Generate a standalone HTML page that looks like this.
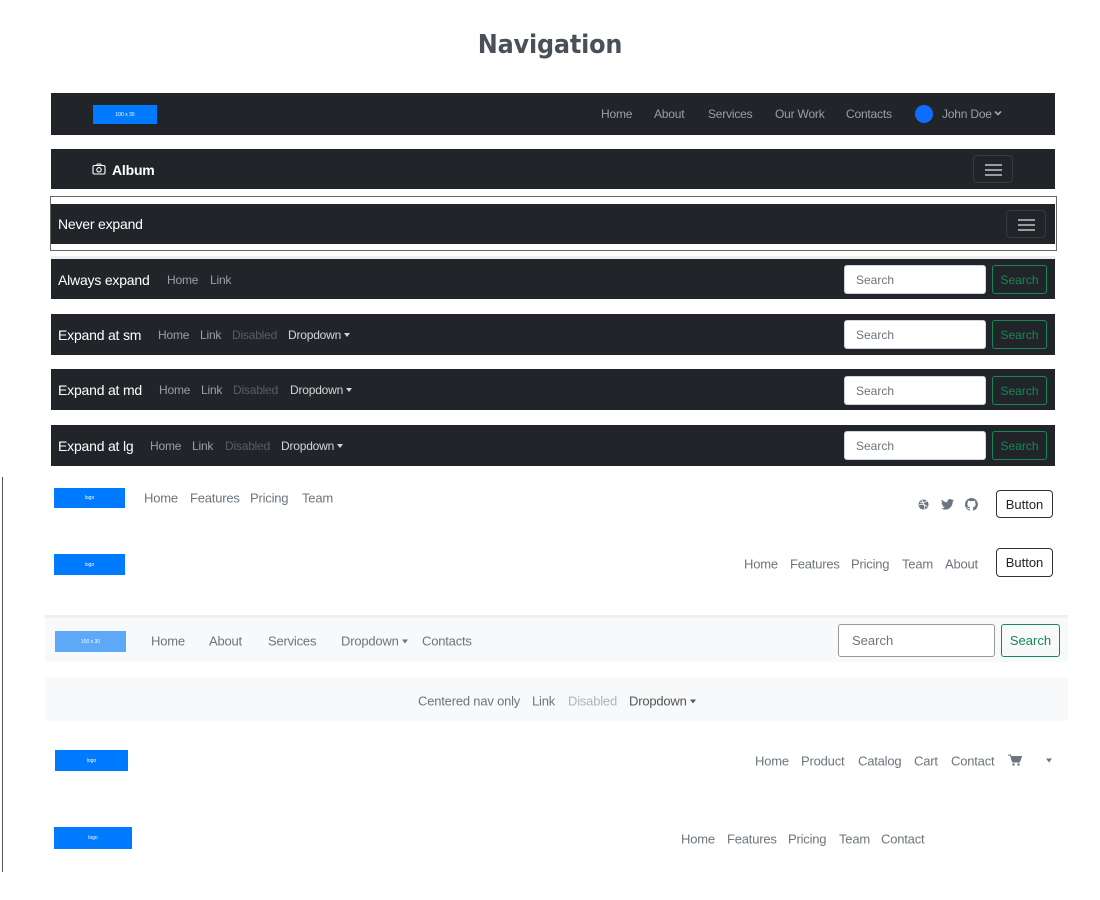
<!DOCTYPE html>
<html><head><meta charset="utf-8"><style>
*{box-sizing:border-box;margin:0;padding:0}
body{width:1100px;height:900px;background:#fff;font-family:"Liberation Sans",sans-serif;position:relative;overflow:hidden}
.a{position:absolute;white-space:nowrap}
.bar{position:absolute;left:51px;width:1004px;background:#212529}
.t{position:absolute;white-space:nowrap;transform:translateY(-50%);line-height:1;letter-spacing:-0.2px}
.dk{color:rgba(255,255,255,.55);font-size:12px}
.wh{color:#fff}
.dis{color:rgba(255,255,255,.25);font-size:12px}
.gr{color:#6c757d;font-size:13px}
.inp{position:absolute;background:#fff;border-radius:3px;border:1px solid #ced4da;color:#6c757d;font-size:12px;padding-left:11px;display:flex;align-items:center}
.sb{position:absolute;border:1px solid #198754;border-radius:3px;color:#198754;font-size:12px;display:flex;align-items:center;justify-content:center}
.logo{position:absolute;background:#007bff;color:#fff;font-size:5px;display:flex;align-items:center;justify-content:center}
.tog{position:absolute;border:1px solid rgba(255,255,255,.1);border-radius:4px}
.tog i{position:absolute;left:11px;width:17px;height:2px;background:rgba(255,255,255,.55)}
.car{display:inline-block;width:0;height:0;border-left:3.5px solid transparent;border-right:3.5px solid transparent;border-top:4px solid currentColor;vertical-align:2px;margin-left:3px}
.btn{position:absolute;border:1px solid #333;border-radius:4px;font-size:13px;color:#212529;display:flex;align-items:center;justify-content:center}
</style></head><body>
<div class="t" style="left:0;width:1100px;text-align:center;top:45px;font-size:26px;font-weight:bold;color:#495057;font-family:'DejaVu Sans','Liberation Sans',sans-serif;transform:translateY(-50%) scaleX(.92)">Navigation</div>

<div class="bar" style="top:93px;height:42px"></div>
<div class="logo" style="left:93px;top:105px;width:64px;height:19px">100 x 30</div>
<div class="t dk" style="left:601px;top:114px">Home</div>
<div class="t dk" style="left:654px;top:114px">About</div>
<div class="t dk" style="left:708px;top:114px">Services</div>
<div class="t dk" style="left:775px;top:114px">Our Work</div>
<div class="t dk" style="left:846px;top:114px">Contacts</div>
<div class="a" style="left:915px;top:105px;width:18px;height:18px;border-radius:50%;background:#0d6efd"></div>
<div class="t dk" style="left:942px;top:114px">John Doe</div>
<svg class="a" style="left:994px;top:110px" width="8" height="6" viewBox="0 0 8 6"><path d="M1 1.5L4 4.5L7 1.5" fill="none" stroke="rgba(255,255,255,.6)" stroke-width="1.6"/></svg>

<div class="bar" style="top:149px;height:40px"></div>
<svg class="a" style="left:92px;top:163px" width="14" height="12" viewBox="0 0 14 12"><rect x="1" y="2.5" width="12" height="8.5" rx="1.5" fill="none" stroke="#fff" stroke-width="1.1"/><path d="M4.5 2.5 L5.5 1 H8.5 L9.5 2.5" fill="none" stroke="#fff" stroke-width="1.1"/><circle cx="7" cy="6.8" r="2.2" fill="none" stroke="#fff" stroke-width="1.1"/></svg>
<div class="t wh" style="left:112px;top:170px;font-size:14px;font-weight:bold">Album</div>
<div class="tog" style="left:973px;top:155px;width:40px;height:28px"><i style="top:8px"></i><i style="top:13px"></i><i style="top:18px"></i></div>

<div class="a" style="left:50px;top:196px;width:1007px;height:55px;border:1px solid #666"></div>
<div class="bar" style="top:204px;height:40px"></div>
<div class="t wh" style="left:58px;top:224px;font-size:14px">Never expand</div>
<div class="tog" style="left:1006px;top:210px;width:40px;height:28px"><i style="top:8px"></i><i style="top:13px"></i><i style="top:18px"></i></div>

<div class="a" style="left:51px;top:256px;width:1004px;height:3px;background:#eee"></div>
<div class="bar" style="top:259px;height:40px"></div>
<div class="t wh" style="left:58px;top:280px;font-size:14px">Always expand</div>
<div class="t dk" style="left:167px;top:280px">Home</div>
<div class="t dk" style="left:210px;top:280px">Link</div>
<div class="inp" style="left:844px;top:265px;width:142px;height:29px">Search</div>
<div class="sb" style="left:992px;top:265px;width:55px;height:29px">Search</div>

<div class="bar" style="top:314px;height:41px"></div>
<div class="t wh" style="left:58px;top:335px;font-size:14px">Expand at sm</div>
<div class="t dk" style="left:158px;top:335px">Home</div>
<div class="t dk" style="left:200px;top:335px">Link</div>
<div class="t dis" style="left:232px;top:335px">Disabled</div>
<div class="t dk" style="left:288px;top:335px;color:rgba(255,255,255,.8)">Dropdown<span class="car"></span></div>
<div class="inp" style="left:844px;top:320px;width:142px;height:29px">Search</div>
<div class="sb" style="left:992px;top:320px;width:55px;height:29px">Search</div>

<div class="bar" style="top:369px;height:41px"></div>
<div class="t wh" style="left:58px;top:390px;font-size:14px">Expand at md</div>
<div class="t dk" style="left:159px;top:390px">Home</div>
<div class="t dk" style="left:201px;top:390px">Link</div>
<div class="t dis" style="left:233px;top:390px">Disabled</div>
<div class="t dk" style="left:290px;top:390px;color:rgba(255,255,255,.8)">Dropdown<span class="car"></span></div>
<div class="inp" style="left:844px;top:376px;width:142px;height:29px">Search</div>
<div class="sb" style="left:992px;top:376px;width:55px;height:29px">Search</div>

<div class="bar" style="top:425px;height:41px"></div>
<div class="t wh" style="left:58px;top:446px;font-size:14px">Expand at lg</div>
<div class="t dk" style="left:150px;top:446px">Home</div>
<div class="t dk" style="left:192px;top:446px">Link</div>
<div class="t dis" style="left:225px;top:446px">Disabled</div>
<div class="t dk" style="left:281px;top:446px;color:rgba(255,255,255,.8)">Dropdown<span class="car"></span></div>
<div class="inp" style="left:844px;top:431px;width:142px;height:29px">Search</div>
<div class="sb" style="left:992px;top:431px;width:55px;height:29px">Search</div>

<div class="a" style="left:2px;top:477px;width:1px;height:395px;background:#555"></div>

<div class="logo" style="left:54px;top:488px;width:71px;height:20px">logo</div>
<div class="t gr" style="left:144px;top:498px">Home</div>
<div class="t gr" style="left:190px;top:498px">Features</div>
<div class="t gr" style="left:250px;top:498px">Pricing</div>
<div class="t gr" style="left:302px;top:498px">Team</div>
<svg class="a" style="left:918px;top:499px" width="11" height="11" viewBox="0 0 12 12"><circle cx="6" cy="6" r="5.5" fill="#6c757d"/><path d="M2 3.5c3 .5 6 0 8-1.5M1 6.5c3-1.5 6-1 9 2M4 1c1.5 2 3 5 3.5 10" fill="none" stroke="#fff" stroke-width=".9"/></svg>
<svg class="a" style="left:941px;top:499px" width="13" height="11" viewBox="0 0 24 20"><path d="M24 2.4a10 10 0 0 1-2.8.8A5 5 0 0 0 23.3.4a10 10 0 0 1-3.1 1.2A4.9 4.9 0 0 0 11.8 6 14 14 0 0 1 1.7.9a4.9 4.9 0 0 0 1.5 6.6 5 5 0 0 1-2.2-.6 4.9 4.9 0 0 0 3.900 4.9 5 5 0 0 1-2.2.1 4.9 4.9 0 0 0 4.6 3.4A9.9 9.9 0 0 1 0 17.3 14 14 0 0 0 7.5 19.5c9.1 0 14-7.500 14-14v-.6A10 10 0 0 0 24 2.4z" fill="#6c757d"/></svg>
<svg class="a" style="left:965px;top:498px" width="13" height="13" viewBox="0 0 16 16"><path d="M8 0a8 8 0 0 0-2.5 15.6c.4 0 .5-.2.5-.4v-1.5c-2.200.5-2.700-1-2.700-1-.4-.9-.9-1.2-.9-1.2-.7-.5.1-.5.1-.5.8.1 1.2.8 1.2.8.7 1.3 1.900.9 2.300.7.1-.5.3-.9.5-1.1-1.800-.2-3.600-.9-3.600-4 0-.9.3-1.600.8-2.100-.1-.2-.4-1 .1-2.100 0 0 .7-.2 2.200.8a7.400 7.400 0 0 1 4 0c1.500-1 2.200-.8 2.200-.8.4 1.100.2 1.900.1 2.100.5.6.8 1.300.8 2.100 0 3.100-1.900 3.800-3.600 4 .3.3.6.8.6 1.500v2.200c0 .2.1.5.6.4A8 8 0 0 0 8 0z" fill="#6c757d"/></svg>
<div class="btn" style="left:996px;top:490px;width:57px;height:28px">Button</div>

<div class="logo" style="left:54px;top:554px;width:71px;height:21px">logo</div>
<div class="t gr" style="left:744px;top:564px">Home</div>
<div class="t gr" style="left:790px;top:564px">Features</div>
<div class="t gr" style="left:851px;top:564px">Pricing</div>
<div class="t gr" style="left:902px;top:564px">Team</div>
<div class="t gr" style="left:945px;top:564px">About</div>
<div class="btn" style="left:996px;top:548px;width:57px;height:29px">Button</div>

<div class="a" style="left:45px;top:615px;width:1023px;height:47px;background:#f8f9fa;border-top:3px solid #eff0f1"></div>
<div class="logo" style="left:55px;top:631px;width:71px;height:21px;background:#5ea8f8">100 x 30</div>
<div class="t gr" style="left:151px;top:641px">Home</div>
<div class="t gr" style="left:209px;top:641px">About</div>
<div class="t gr" style="left:268px;top:641px">Services</div>
<div class="t gr" style="left:341px;top:641px">Dropdown<span class="car"></span></div>
<div class="t gr" style="left:422px;top:641px">Contacts</div>
<div class="inp" style="left:838px;top:624px;width:157px;height:33px;font-size:13px;padding-left:13px;border-color:#999">Search</div>
<div class="sb" style="left:1001px;top:624px;width:59px;height:33px;font-size:13px">Search</div>

<div class="a" style="left:45px;top:678px;width:1023px;height:43px;background:#f8f9fa"></div>
<div class="t gr" style="left:418px;top:701px">Centered nav only</div>
<div class="t gr" style="left:532px;top:701px">Link</div>
<div class="t gr" style="left:568px;top:701px;color:#adb5bd">Disabled</div>
<div class="t gr" style="left:629px;top:701px;color:#555">Dropdown<span class="car"></span></div>

<div class="logo" style="left:55px;top:750px;width:73px;height:21px">logo</div>
<div class="t gr" style="left:755px;top:761px">Home</div>
<div class="t gr" style="left:801px;top:761px">Product</div>
<div class="t gr" style="left:858px;top:761px">Catalog</div>
<div class="t gr" style="left:914px;top:761px">Cart</div>
<div class="t gr" style="left:951px;top:761px">Contact</div>
<svg class="a" style="left:1008px;top:754px" width="14" height="12" viewBox="0 0 14 12"><path d="M0 1h2.5l2 7h7l2-5.5H3.5" fill="#6c757d" stroke="#6c757d" stroke-width="1"/><circle cx="5.5" cy="10.5" r="1.2" fill="#6c757d"/><circle cx="10.5" cy="10.5" r="1.2" fill="#6c757d"/></svg>
<div class="t gr" style="left:1043px;top:760px"><span class="car"></span></div>

<div class="logo" style="left:54px;top:827px;width:78px;height:22px">logo</div>
<div class="t gr" style="left:681px;top:839px">Home</div>
<div class="t gr" style="left:727px;top:839px">Features</div>
<div class="t gr" style="left:788px;top:839px">Pricing</div>
<div class="t gr" style="left:839px;top:839px">Team</div>
<div class="t gr" style="left:881px;top:839px">Contact</div>
</body></html>
